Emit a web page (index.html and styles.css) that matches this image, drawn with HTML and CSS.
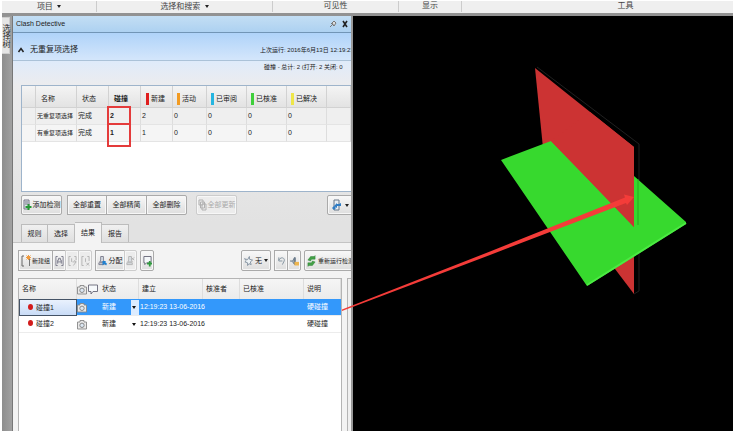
FILE: index.html
```html
<!DOCTYPE html>
<html lang="zh-CN">
<head>
<meta charset="utf-8">
<title>Clash Detective</title>
<link rel="stylesheet" href="styles.css">
</head>
<body>
<svg class="defs" aria-hidden="true">
  <symbol id="camera" viewBox="0 0 10 10"><path d="M.5 2.500h2.500V1h4v1.500h2.500v7H.5z" fill="#e9e9e9" stroke="#888" stroke-width=".9"/><circle cx="5" cy="5.800" r="2.200" fill="#dce8f4" stroke="#888"/></symbol>
  <symbol id="bubble" viewBox="0 0 10 10"><path d="M.5 .5h9v6.500H5L3 9.500V7H.5z" fill="#f6f9fb" stroke="#667" stroke-width=".9"/></symbol>
  <symbol id="brackets" viewBox="0 0 10 12"><path d="M3 1H1v10h2M7 1h2v10H7M3 9V5h1V3h2v2h1v4M3 7h4" fill="none" stroke="currentColor"/></symbol>
  <symbol id="person" viewBox="0 0 10 12"><path d="M3 1h3v4l1 2H2l1-2zM1 10V8h6v2z" fill="#d8dfe6" stroke="currentColor"/></symbol>
</svg>
<div class="app">
  <nav class="ribbon" aria-label="功能区">
    <button class="group g1">项目 <i class="caret"></i></button>
    <button class="group g2">选择和搜索 <i class="caret"></i></button>
    <span class="group g3">可见性</span>
    <span class="group g4">显示</span>
    <span class="group g5">工具</span>
  </nav>
  <main class="workspace">
    <aside class="dock"><button class="dock-tab">选择树</button></aside>
    <section class="panel">
      <header class="titlebar">
        <h1>Clash Detective</h1>
        <button class="plain" aria-label="固定"><svg viewBox="0 0 8 8"><path d="M1 7l2-2M2 3l3 3M3 3l2-2 2 2-2 3z" fill="#ddd" stroke="#777"/></svg></button>
        <button class="plain" aria-label="关闭"><svg viewBox="0 0 8 8"><path d="M2 1l4 6M6 1L2 7" stroke="#222" stroke-width="1.600"/></svg></button>
      </header>
      <div class="test-head">
        <button class="plain" aria-label="折叠"><svg viewBox="0 0 8 8"><path d="M1.500 6L4 2.500 6.500 6" fill="none" stroke="#222" stroke-width="1.500"/></svg></button>
        <h2>无重复项选择</h2>
        <p class="info">上次运行: 2016年6月13日 12:19:23</p>
      </div>
      <div class="tests">
        <p class="info summary">碰撞 - 总计: 2 (打开: 2 关闭: 0</p>
        <div class="grid-box">
          <table class="grid">
            <colgroup><col class="w14"><col class="w41"><col class="w32"><col class="w32"><col class="w32"><col class="w34"><col class="w40"><col class="w40"><col class="w40"><col></colgroup>
            <thead><tr><th></th><th>名称</th><th>状态</th><th class="strong">碰撞</th><th><i class="flag red"></i>新建</th><th><i class="flag orange"></i>活动</th><th><i class="flag cyan"></i>已审阅</th><th><i class="flag green"></i>已核准</th><th><i class="flag yellow"></i>已解决</th><th></th></tr></thead>
            <tbody>
              <tr><td></td><td class="name">无重复项选择</td><td>完成</td><td class="strong marked">2</td><td>2</td><td>0</td><td>0</td><td>0</td><td>0</td><td></td></tr>
              <tr><td></td><td class="name">有重复项选择</td><td>完成</td><td class="strong marked">1</td><td>1</td><td>0</td><td>0</td><td>0</td><td>0</td><td></td></tr>
            </tbody>
          </table>
        </div>
        <div class="actions">
          <button class="btn add"><svg viewBox="0 0 9 12"><path d="M1 1h5v9H1z" fill="#dce2e8" stroke="#778"/><path d="M2 3h3M2 5h3" stroke="#778"/><path d="M5.500 5v6M2.500 8h6" stroke="#259735" stroke-width="2"/></svg>添加检测</button>
          <div class="joined"><button class="btn w40">全部重置</button><button class="btn w40">全部精简</button><button class="btn w40">全部删除</button></div>
          <button class="btn update" disabled><svg viewBox="0 0 9 12"><path d="M1 1h4v5H1zM2.500 3h4v6h-4zM4 5h4v6H4z" fill="#eee" stroke="#999"/></svg>全部更新</button>
          <button class="btn export" aria-label="导入/导出"><svg viewBox="0 0 9 12"><path d="M2 1h5v10H2z" fill="#e8edf2" stroke="#678"/><path d="M9 4v3H5v2L2 7l3-3v1h2zM0 9l2-2 2 2-2 2z" fill="#2f7cc4"/></svg><i class="caret"></i></button>
        </div>
      </div>
      <div class="tabs" role="tablist"><button role="tab">规则</button><button role="tab">选择</button><button role="tab" aria-selected="true">结果</button><button role="tab">报告</button></div>
      <div class="results">
        <div class="toolbar">
          <div class="joined">
            <button class="btn newgroup"><svg viewBox="0 0 10 12"><path d="M3 1H1v10h2" fill="none" stroke="#666"/><path d="M8.500 4v7" stroke="#777"/><path d="M7.500 0v5M5 2.500h5M5.500 .5l4 4M9.500 .5l-4 4" stroke="#f09a3c"/></svg>新建组</button>
            <button class="btn sq" aria-label="分组"><svg viewBox="0 0 10 12"><use href="#brackets"/></svg></button>
            <button class="btn sq" disabled aria-label="移出组"><svg viewBox="0 0 10 12"><path d="M3 1H1v10h2M7 1h2v4M4 3v4M5 7h4M7 5l2 2-3 4" fill="none" stroke="currentColor"/></svg></button>
            <button class="btn sq" disabled aria-label="分解组"><svg viewBox="0 0 10 12"><path d="M3 1H1v10h2M7 1h2v5M5 3v4M6 8l3 3M9 8l-3 3" fill="none" stroke="currentColor"/></svg></button>
          </div>
          <div class="joined">
            <button class="btn assign"><svg viewBox="0 0 10 12"><use href="#person"/><path d="M5 6h4L8 7l2 2-1 2-2-2-2 2z" fill="#1f80cf"/></svg>分配</button>
            <button class="btn unassign" disabled aria-label="取消分配"><svg viewBox="0 0 10 12"><use href="#person"/><path d="M6 2l3 3M9 2L6 5" stroke="currentColor"/></svg></button>
          </div>
          <button class="btn sq" aria-label="添加注释"><svg viewBox="0 0 10 12"><path d="M1 1h8v7H4L2 10V8H1z" fill="#f4f7f9" stroke="#667"/><path d="M7.500 6v6M4.500 9h6" stroke="#2e9b3c" stroke-width="2"/></svg></button>
          <div class="toolbar-right">
            <button class="btn filter"><svg viewBox="0 0 10 12"><path d="M.5 3.500L4 4.500 6 1v3l3.500 1L7 7l1 3-2.500-1L4 11V8L1 7l1.500-1.500z" fill="#eef3f6" stroke="#758696" stroke-width=".9"/></svg>无<i class="caret"></i></button>
            <div class="joined"><button class="btn sq" aria-label="撤消"><svg viewBox="0 0 10 12"><path d="M2 2v4h4M2 5c2-4 7-3 6 1L6 10" fill="none" stroke="#7c8d9b"/></svg></button><button class="btn sq" aria-label="精简"><svg viewBox="0 0 10 12"><path d="M0 6h3l2-4v8L3 7M6 2v5" fill="#9ba9b4" stroke="#667788"/><path d="M5 7h5v4H5z" fill="#edb54e"/></svg></button></div>
            <button class="btn rerun"><svg viewBox="0 0 10 12"><path d="M1 5l3-4h4l1-1v4L5 4 4 6zM9 7l-3 4H2l-1 1V8l4 0 1-2z" fill="#43a047" stroke="#2c8135" stroke-width=".5"/></svg>重新运行检测</button>
          </div>
        </div>
        <div class="split">
          <div class="list-box">
            <table class="list">
              <colgroup><col class="w58"><col class="w11"><col class="w11"><col class="w40"><col class="w64"><col class="w37"><col class="w64"><col></colgroup>
              <thead><tr><th>名称</th><th class="ico"><svg><use href="#camera"/></svg></th><th class="ico"><svg><use href="#bubble"/></svg></th><th>状态</th><th>建立</th><th>核准者</th><th>已核准</th><th>说明</th></tr></thead>
              <tbody>
                <tr class="selected"><td class="clash"><i class="dot"></i>碰撞1</td><td class="ico"><svg><use href="#camera"/></svg></td><td></td><td><div class="status"><select aria-label="碰撞1 状态"><option>新建</option></select><i class="caret"></i></div></td><td class="time">12:19:23 13-06-2016</td><td></td><td></td><td>硬碰撞</td></tr>
                <tr><td class="clash"><i class="dot"></i>碰撞2</td><td class="ico"><svg><use href="#camera"/></svg></td><td></td><td><div class="status"><select aria-label="碰撞2 状态"><option>新建</option></select><i class="caret"></i></div></td><td class="time">12:19:23 13-06-2016</td><td></td><td></td><td>硬碰撞</td></tr>
              </tbody>
            </table>
          </div>
          <div class="side"></div>
        </div>
      </div>
    </section>
    <section class="viewport">
      <svg viewBox="353 16 380 415" preserveAspectRatio="xMinYMin meet" role="img" aria-label="三维视图">
        <path d="M537 67L639 144V291L634 294" fill="none" stroke="#202020"/>
        <path d="M535 68L634 147V294L546 178z" fill="#cc3333"/>
        <path d="M501 160L551 141L588 179 634 227V176L686 222V224L587 286z" fill="#37d92e"/>
        <path d="M686 223L587 285" fill="none" stroke="#4bea42" stroke-width="2"/>
        <path d="M551 141L634 227V147L590 112z" fill="#cc3333"/>
        <path d="M638 179v46" stroke="#24a91e"/>
        <path d="M342 309.500L490 251.500 625 197.500 624 194.500 634 197 627 205 626 203 490 255 342 311z" fill="#f43c39"/>
      </svg>
    </section>
  </main>
</div>
</body>
</html>
```

FILE: styles.css
```css
* { box-sizing: border-box; }
body {
  margin: 0;
  background: #fff;
  color: #222;
  font: 7px/10px "Liberation Sans", "Noto Sans CJK SC", sans-serif;
}
h1, h2, p { margin: 0; font-weight: normal; white-space: nowrap; }
h1 { font-size: 7px; }
h2 { font-size: 8px; }
button, select { font: inherit; color: inherit; margin: 0; padding: 0; border: 0; background: none; white-space: nowrap; }
svg { display: block; flex: none; }
.defs { position: absolute; width: 0; height: 0; }
.app { display: flex; flex-direction: column; height: 100vh; padding: 1px 0 3px 2px; overflow: hidden; }
.caret { display: inline-block; border: 2px solid transparent; border-top: 3px solid #222; border-bottom: 0; vertical-align: middle; }

.ribbon { display: flex; height: 15px; flex: none; background: #efefef; border-bottom: 3px solid #929292; color: #444; }
.group { display: block; height: 11px; line-height: 9px; font-size: 8px; text-align: center; border-right: 1px solid #ccc; }
.group .caret { margin-left: 2px; }
.g1 { width: 95px; }
.g2 { width: 176px; }
.g3 { width: 126px; }
.g4 { width: 63px; }
.g5 { flex: 1; border: 0; padding-left: 56px; }

.workspace { display: grid; grid-template-columns: 11px 338px 1fr; flex: 1; min-height: 0; }
.dock { background: linear-gradient(90deg, #8e8e8e, #a1a1a1); border-right: 1px solid #777; }
.dock-tab { width: 8px; height: 37px; margin-top: 1px; background: #e5e5e5; border: 1px solid #ccc; border-left: 0; writing-mode: vertical-rl; text-orientation: upright; font-size: 8px; line-height: 7px; }
.panel { display: flex; flex-direction: column; min-width: 0; overflow: hidden; background: #f3f3f3; }

.titlebar { display: flex; align-items: center; height: 17px; flex: none; padding: 0 2px 0 3px; gap: 4px; background: linear-gradient(#c3def4, #add1f1); border-bottom: 1px solid #7195b6; }
.titlebar h1 { flex: 1; }
.plain svg { width: 8px; height: 8px; }
.test-head { display: flex; align-items: center; height: 28px; flex: none; padding: 6px 0 0 4px; background: linear-gradient(#afd3f9, #d4e6fb); border-bottom: 1px solid #abc2d8; }
.test-head h2 { margin-left: 5px; }
.info { font-size: 6px; line-height: 10px; }
.test-head .info { width: 91px; margin-left: auto; overflow: hidden; }

.tests { flex: none; height: 160px; background: linear-gradient(#dfebfa, #ececee 24px, #e7e7e7 100px, #e2e2e2); }
.summary { width: 87px; height: 24px; line-height: 12px; margin-left: auto; }
.grid-box { height: 107px; margin-left: 8px; border: 1px solid #9eb4cb; border-right: 0; background: #fff; }
table { border-collapse: separate; border-spacing: 0; table-layout: fixed; width: 100%; }
th, td { padding: 0 0 0 1px; text-align: left; font-weight: normal; white-space: nowrap; }
.grid th { height: 22px; padding: 4px 0 0 5px; border-right: 1px solid #d2d2d2; border-bottom: 1px solid #d2d2d2; background: linear-gradient(#f4f4f4, #e3e3e3); }
.grid td { position: relative; height: 17px; border-right: 1px solid #ddd; border-bottom: 1px solid #e4e4e4; background: #f5f5f5; }
.grid tbody tr:first-child td { background: #efefef; }
.grid .name { font-size: 6px; }
.grid .strong { font-weight: bold; }
.marked::after { content: ""; position: absolute; left: -2px; top: -2px; width: 20px; height: 20px; border: 2px solid #e43b3b; }
.grid th:nth-child(n+6) { padding-left: 4px; }
.flag { display: inline-block; width: 3px; height: 12px; margin-right: 2px; vertical-align: middle; }
.red { background: #df1e1e; }
.orange { background: #f29b22; }
.cyan { background: #25b5e0; }
.green { background: #3fcf3b; }
.yellow { background: #eee648; }
.w11 { width: 11px; }
.w14 { width: 14px; }
.w32 { width: 32px; }
.w34 { width: 34px; }
.w37 { width: 37px; }
.w40 { width: 40px; }
.w41 { width: 41px; }
.w58 { width: 58px; }
.w64 { width: 64px; }

.btn { display: flex; align-items: center; justify-content: center; height: 20px; flex: none; border: 1px solid #aaa; border-radius: 2px; background: linear-gradient(#f8f8f8, #dedede); box-shadow: inset 0 0 0 1px #f7f7f7; gap: 2px; }
.btn svg { width: 9px; height: 12px; color: #778; }
.btn:disabled { color: #aaa; border-color: #ccc; background: #ececec; }
.btn:disabled svg { color: #999; opacity: .7; }
.joined { display: flex; flex: none; }
.joined .btn + .btn { margin-left: -1px; border-radius: 0 2px 2px 0; }
.joined .btn:not(:last-child) { border-radius: 0; }
.actions { display: flex; padding: 3px 0 0 8px; }
.actions .joined { margin: 0 9px 0 5px; }
.actions .joined .btn + .btn { width: 41px; }
.add, .update { width: 41px; gap: 1px; }
.export { width: 26px; margin: 0 -2px 0 auto; gap: 4px; }

.tabs { display: flex; align-items: flex-end; height: 22px; flex: none; padding-left: 8px; background: #e2e2e2; border-bottom: 1px solid #c4c4c4; }
.tabs button { width: 27px; height: 18px; border: 1px solid #bcbcbc; border-bottom: 0; border-left-width: 0; background: linear-gradient(#f0f0f0, #dfdfdf); }
.tabs button:first-child { border-left-width: 1px; }
.tabs button[aria-selected="true"] { height: 21px; margin-bottom: -1px; background: #f3f3f3; }

.results { display: flex; flex-direction: column; flex: 1; min-height: 0; padding-left: 5px; }
.toolbar { display: flex; height: 35px; flex: none; padding-top: 7px; gap: 3px; }
.toolbar .btn { height: 21px; }
.toolbar-right { display: flex; gap: 3px; margin-left: auto; }
.newgroup { width: 35px; gap: 1px; }
.newgroup, .rerun { font-size: 6px; }
.btn.newgroup svg { width: 10px; }
.sq { width: 14px; }
.assign { width: 30px; }
.unassign { width: 13px; }
.filter { width: 30px; }
.rerun { width: 53px; margin-right: -6px; }

.split { display: flex; flex: 1; min-height: 0; gap: 5px; }
.list-box { flex: 1; min-width: 0; background: #fff; border: 1px solid #b4b4b4; border-bottom: 0; }
.side { width: 4px; background: #efefef; border: 1px solid #b4b4b4; border-width: 1px 0 0 1px; }
.list th { height: 20px; padding-left: 3px; background: linear-gradient(#f5f5f5, #ebebeb); border-right: 1px solid #ddd; }
.list td { height: 17px; padding-left: 3px; border-bottom: 1px solid #ececec; }
.list th.ico, .list td.ico { padding: 0; border-right: 0; }
.ico svg { width: 10px; height: 11px; }
.list .time { padding-left: 1px; }
.selected td { background: #3398fb; color: #fff; }
.list td.clash { padding-left: 9px; color: #222; }
.selected td.clash { background: linear-gradient(#e9f1fd, #c9dcf7); border: 1px solid #445366; padding-left: 8px; }
.dot { display: inline-block; width: 5px; height: 6px; margin-right: 3px; border-radius: 50%; background: #d21b1b; }
.status { display: flex; align-items: center; justify-content: space-between; height: 15px; padding-right: 3px; }
.status select { appearance: none; width: 20px; }
.status .caret { border-top-color: #111; }
.selected .status { background: linear-gradient(90deg, transparent 29px, #dcecff 29px); }

.viewport { position: relative; z-index: 1; min-width: 0; background: #000; border-left: 2px solid #999; }
.viewport svg { width: 100%; height: 100%; overflow: visible; }
```
